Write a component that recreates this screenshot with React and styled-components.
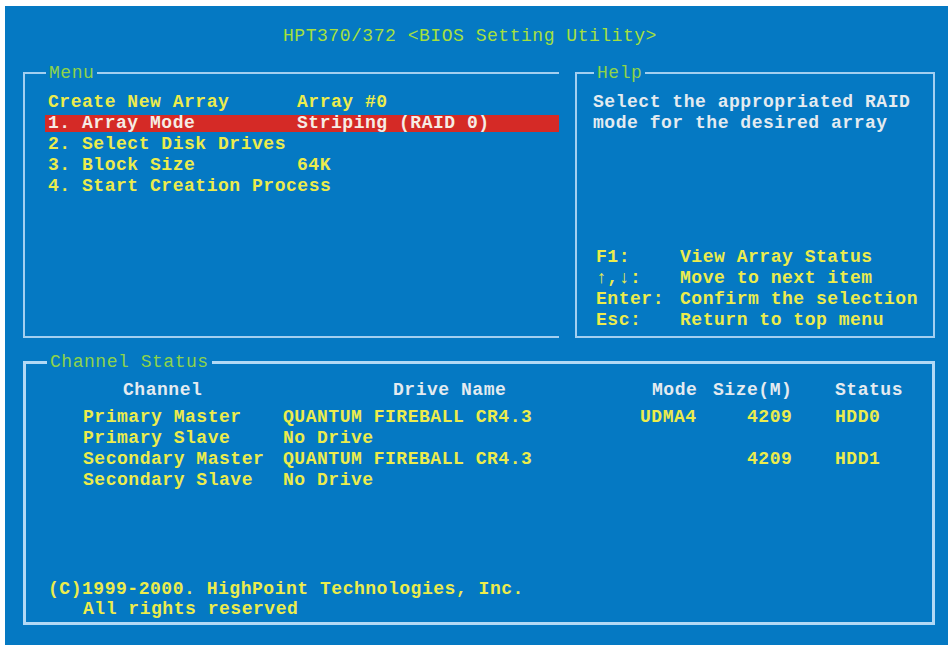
import styled, { createGlobalStyle, css } from 'styled-components'

const GlobalStyle = createGlobalStyle`
  html, body {
    margin: 0;
    padding: 0;
    background: #ffffff;
  }
  body {
    font-family: "Liberation Mono", "DejaVu Sans Mono", monospace;
  }
`;

const Screen = styled.div`
  margin: 6px 3px 3px 5px;
  width: 943px;
  height: 639px;
  background-color: #0579c3;
  box-sizing: border-box;
  padding: 0 13px 0 18px;
  display: flex;
  flex-direction: column;
  font-family: "Liberation Mono", "DejaVu Sans Mono", monospace;
  font-size: 18px;
  font-weight: bold;
  letter-spacing: 0.53px;
  color: #ecec4c;
`;

const Title = styled.div`
  height: 60px;
  line-height: 60px;
  padding-left: 260px;
  color: #a6e03e;
  font-weight: normal;
  white-space: pre;
`;

const TopRow = styled.div`
  display: grid;
  grid-template-columns: 536px 1fr;
  column-gap: 16px;
  height: 272px;
`;

const Box = styled.fieldset`
  margin: 0;
  min-width: 0;
  box-sizing: border-box;
  border: ${p => p.$thick ? '3px solid #b2d9f5' : '2px solid #a3cff0'};
  ${p => p.$open && css`border-right: none;`}
  padding: ${p => p.$pad};
  height: ${p => p.$h};
`;

const Legend = styled.legend`
  padding: 0 3px;
  margin-left: ${p => p.$shift};
  line-height: 14px;
  color: #8ed34a;
  font-weight: normal;
  white-space: pre;
`;

const Rows = styled.div`
  display: flex;
  flex-direction: column;
  gap: 4px;
`;

const MenuRow = styled.div`
  display: grid;
  grid-template-columns: 249px 1fr;
  height: 17px;
  line-height: 17px;
  padding-left: 3px;
  white-space: pre;
  ${p => p.$active && css`
    background-color: #d52a26;
    color: #f6ece4;
  `}
`;

const HelpBody = styled.div`
  height: 235px;
  display: flex;
  flex-direction: column;
  justify-content: space-between;
`;

const HelpText = styled.div`
  color: #e4ebf0;
  line-height: 17px;
  display: flex;
  flex-direction: column;
  gap: 4px;
  white-space: pre;
`;

const KeyRow = styled.div`
  display: grid;
  grid-template-columns: 84px 1fr;
  height: 17px;
  line-height: 17px;
  padding-left: 3px;
  white-space: pre;
`;

const Gap = styled.div`
  height: 17px;
  flex: none;
`;

const TableHead = styled.div`
  display: grid;
  grid-template-columns: 270px 259px 61px 122px 1fr;
  padding-left: 75px;
  height: 17px;
  line-height: 17px;
  color: #e4ebf0;
  white-space: pre;
`;

const TableBody = styled.div`
  margin-top: 10px;
  display: flex;
  flex-direction: column;
  gap: 4px;
`;

const TableRow = styled.div`
  display: grid;
  grid-template-columns: 200px 357px 107px 88px 1fr;
  padding-left: 35px;
  height: 17px;
  line-height: 17px;
  white-space: pre;
`;

const Footer = styled.div`
  margin-top: 92px;
  display: flex;
  flex-direction: column;
  gap: 3px;
  line-height: 17px;
  white-space: pre;
`;

const Indent = styled.span`
  padding-left: 35px;
`;

const menu = [
  ['Create New Array', 'Array #0'],
  ['1. Array Mode', 'Striping (RAID 0)', true],
  ['2. Select Disk Drives', ''],
  ['3. Block Size', '64K'],
  ['4. Start Creation Process', ''],
];

const keys = [
  ['F1:', 'View Array Status'],
  ['\u2191,\u2193:', 'Move to next item'],
  ['Enter:', 'Confirm the selection'],
  ['Esc:', 'Return to top menu'],
];

const channels = [
  ['Primary Master', 'QUANTUM FIREBALL CR4.3', 'UDMA4', '4209', 'HDD0'],
  ['Primary Slave', 'No Drive', '', '', ''],
  ['Secondary Master', 'QUANTUM FIREBALL CR4.3', '', '4209', 'HDD1'],
  ['Secondary Slave', 'No Drive', '', '', ''],
];

const App = () => {
  return (
    <>
      <GlobalStyle />
      <Screen>
        <Title>HPT370/372 &lt;BIOS Setting Utility&gt;</Title>
        <TopRow>
          <Box $open $pad="13.5px 0 0 20px" $h="272px">
            <Legend $shift="1px">Menu</Legend>
            <Rows>
              {menu.map(([label, value, active]) => (
                <MenuRow key={label} $active={active}>
                  <span>{label}</span>
                  <span>{value}</span>
                </MenuRow>
              ))}
            </Rows>
          </Box>
          <Box $pad="13.5px 0 0 16px" $h="272px">
            <Legend $shift="1px">Help</Legend>
            <HelpBody>
              <HelpText>
                <span>Select the appropriated RAID</span>
                <span>mode for the desired array</span>
              </HelpText>
              <Rows>
                {keys.map(([k, d]) => (
                  <KeyRow key={k}>
                    <span>{k}</span>
                    <span>{d}</span>
                  </KeyRow>
                ))}
              </Rows>
            </HelpBody>
          </Box>
        </TopRow>
        <Gap />
        <Box $thick $pad="13px 0 0 22px" $h="270px">
          <Legend $shift="-1px">Channel Status</Legend>
          <TableHead>
            <span>Channel</span>
            <span>Drive Name</span>
            <span>Mode</span>
            <span>Size(M)</span>
            <span>Status</span>
          </TableHead>
          <TableBody>
            {channels.map(row => (
              <TableRow key={row[0]}>
                {row.map((cell, i) => <span key={i}>{cell}</span>)}
              </TableRow>
            ))}
          </TableBody>
          <Footer>
            <span>(C)1999-2000. HighPoint Technologies, Inc.</span>
            <Indent>All rights reserved</Indent>
          </Footer>
        </Box>
      </Screen>
    </>
  )
}

export default App
